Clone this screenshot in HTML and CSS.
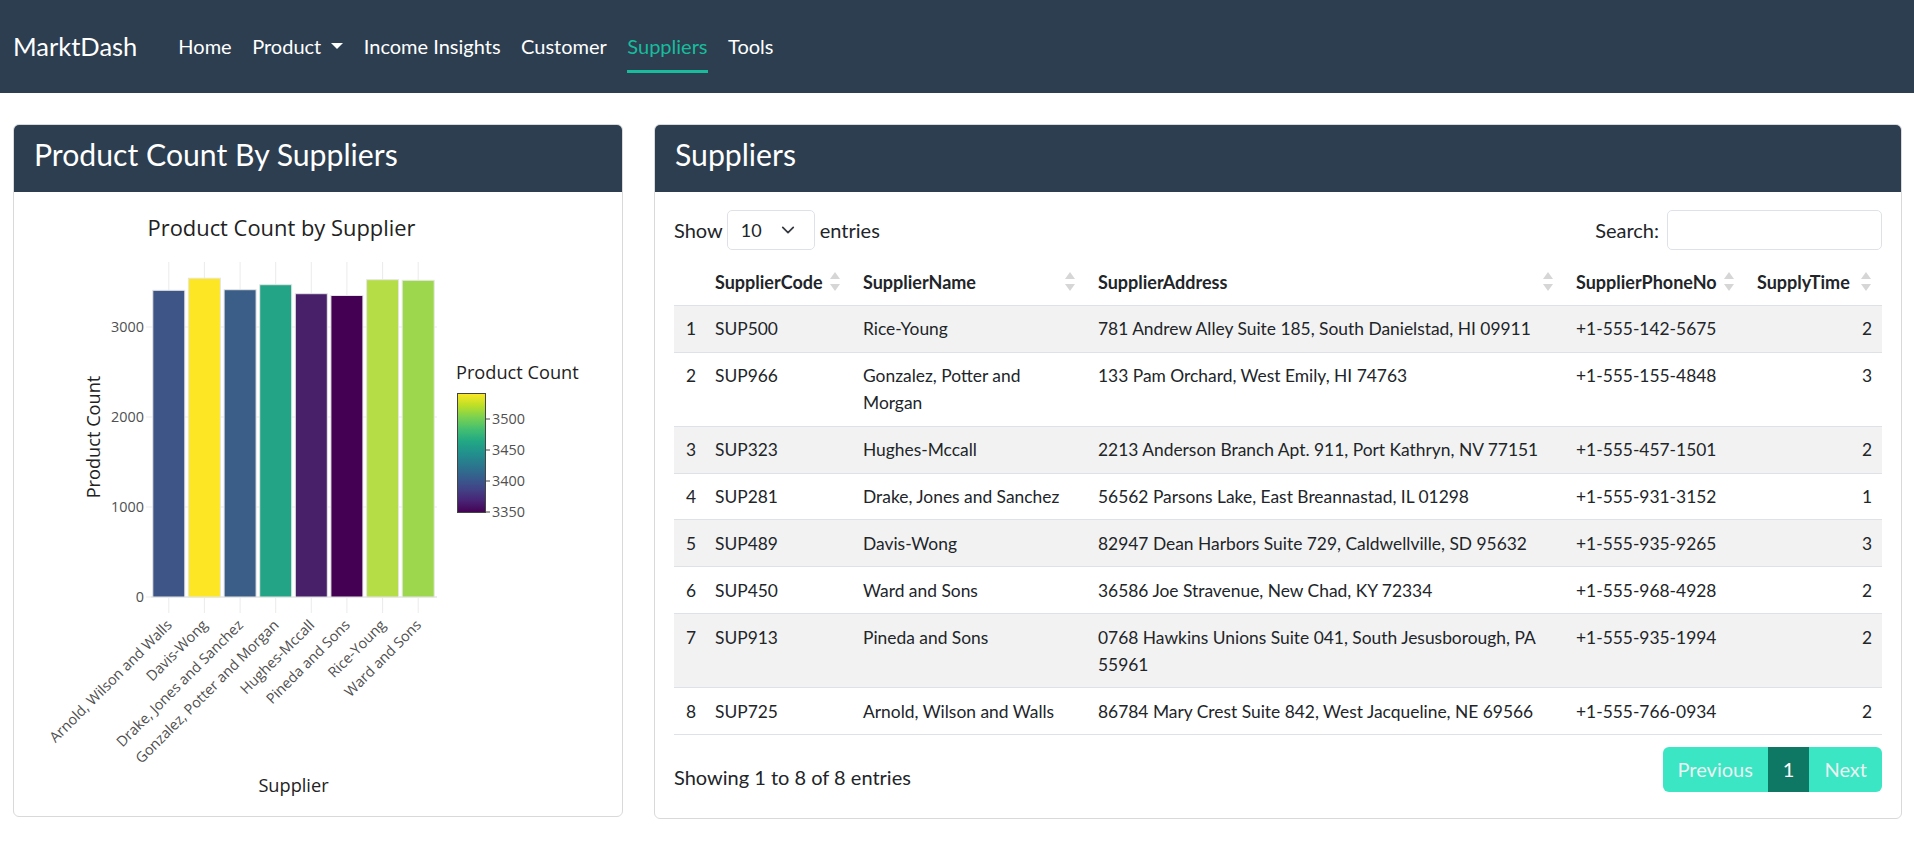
FILE: index.html
```html
<!DOCTYPE html>
<html lang="en">
<head>
<meta charset="utf-8">
<title>MarktDash - Suppliers</title>
<link rel="stylesheet" href="styles.css">
</head>
<body>
<nav class="navbar">
  <a class="brand" href="#">MarktDash</a>
  <ul class="nav">
    <li><a class="nav-link" href="#">Home</a></li>
    <li><a class="nav-link dropdown" href="#">Product<span class="caret"></span></a></li>
    <li><a class="nav-link" href="#">Income Insights</a></li>
    <li><a class="nav-link" href="#">Customer</a></li>
    <li><a class="nav-link active" href="#">Suppliers</a></li>
    <li><a class="nav-link" href="#">Tools</a></li>
  </ul>
</nav>

<main class="content">
  <section class="card card-chart">
    <header class="card-header"><h3>Product Count By Suppliers</h3></header>
    <div class="card-body chart-body">
      <svg class="chart" width="608" height="624" viewBox="14 192 608 624" xmlns="http://www.w3.org/2000/svg">
        <defs>
          <linearGradient id="viridis" x1="0" y1="1" x2="0" y2="0">
            <stop offset="0" stop-color="#440154"/>
            <stop offset="0.1" stop-color="#482475"/>
            <stop offset="0.2" stop-color="#414487"/>
            <stop offset="0.3" stop-color="#355f8d"/>
            <stop offset="0.4" stop-color="#2a788e"/>
            <stop offset="0.5" stop-color="#21918c"/>
            <stop offset="0.6" stop-color="#22a884"/>
            <stop offset="0.7" stop-color="#44bf70"/>
            <stop offset="0.8" stop-color="#7ad151"/>
            <stop offset="0.9" stop-color="#bddf26"/>
            <stop offset="1" stop-color="#fde725"/>
          </linearGradient>
        </defs>
        <text class="c-title" x="281.5" y="235.5" text-anchor="middle">Product Count by Supplier</text>

        <g class="grid">
          <line x1="151" y1="507" x2="437" y2="507"/>
          <line x1="151" y1="417" x2="437" y2="417"/>
          <line x1="151" y1="327" x2="437" y2="327"/>
          <line x1="168.8" y1="262" x2="168.8" y2="613"/>
          <line x1="204.4" y1="262" x2="204.4" y2="613"/>
          <line x1="240.1" y1="262" x2="240.1" y2="613"/>
          <line x1="275.7" y1="262" x2="275.7" y2="613"/>
          <line x1="311.3" y1="262" x2="311.3" y2="613"/>
          <line x1="346.9" y1="262" x2="346.9" y2="613"/>
          <line x1="382.6" y1="262" x2="382.6" y2="613"/>
          <line x1="418.2" y1="262" x2="418.2" y2="613"/>
          <line x1="146" y1="597" x2="151" y2="597"/>
          <line x1="146" y1="507" x2="151" y2="507"/>
          <line x1="146" y1="417" x2="151" y2="417"/>
          <line x1="146" y1="327" x2="151" y2="327"/>
        </g>
        <line class="zero" x1="151" y1="597" x2="437" y2="597"/>

        <g class="ytick" text-anchor="end">
          <text x="144" y="602">0</text>
          <text x="144" y="512">1000</text>
          <text x="144" y="422">2000</text>
          <text x="144" y="332">3000</text>
        </g>

        <g class="bars">
          <rect x="152.8" y="290.3" width="32" height="306.7" fill="#3e5588"/>
          <rect x="188.4" y="278.2" width="32" height="318.8" fill="#fde725"/>
          <rect x="224.1" y="289.7" width="32" height="307.3" fill="#3b5e88"/>
          <rect x="259.7" y="284.7" width="32" height="312.3" fill="#24a486"/>
          <rect x="295.3" y="293.7" width="32" height="303.3" fill="#48206a"/>
          <rect x="330.9" y="295.5" width="32" height="301.5" fill="#440154"/>
          <rect x="366.6" y="279.7" width="32" height="317.3" fill="#b4dd46"/>
          <rect x="402.2" y="280.3" width="32" height="316.7" fill="#9dd74d"/>
        </g>

        <g class="xtick" text-anchor="end">
          <text transform="translate(172.8,626) rotate(-45)">Arnold, Wilson and Walls</text>
          <text transform="translate(208.4,626) rotate(-45)">Davis-Wong</text>
          <text transform="translate(244.1,626) rotate(-45)">Drake, Jones and Sanchez</text>
          <text transform="translate(279.7,626) rotate(-45)">Gonzalez, Potter and Morgan</text>
          <text transform="translate(315.3,626) rotate(-45)">Hughes-Mccall</text>
          <text transform="translate(350.9,626) rotate(-45)">Pineda and Sons</text>
          <text transform="translate(386.6,626) rotate(-45)">Rice-Young</text>
          <text transform="translate(422.2,626) rotate(-45)">Ward and Sons</text>
        </g>

        <text class="a-title" transform="translate(99.5,437) rotate(-90)" text-anchor="middle">Product Count</text>
        <text class="a-title" x="293.5" y="792" text-anchor="middle">Supplier</text>

        <text class="a-title" x="456" y="379">Product Count</text>
        <rect x="457.5" y="393.5" width="28" height="119" fill="url(#viridis)" stroke="#444" stroke-width="1"/>
        <g class="grid-dark">
          <line x1="486" y1="419" x2="490" y2="419"/>
          <line x1="486" y1="450" x2="490" y2="450"/>
          <line x1="486" y1="481" x2="490" y2="481"/>
          <line x1="486" y1="512" x2="490" y2="512"/>
        </g>
        <g class="ytick">
          <text x="492" y="424">3500</text>
          <text x="492" y="455">3450</text>
          <text x="492" y="486">3400</text>
          <text x="492" y="517">3350</text>
        </g>
      </svg>
    </div>
  </section>

  <section class="card card-table">
    <header class="card-header"><h3>Suppliers</h3></header>
    <div class="card-body table-body">
      <div class="dt-top">
        <label class="dt-length">Show
          <span class="select">10
            <svg width="14" height="10" viewBox="0 0 16 10"><path d="M2 2l6 6 6-6" fill="none" stroke="#343a40" stroke-width="2" stroke-linecap="round" stroke-linejoin="round"/></svg>
          </span>
          entries</label>
        <label class="dt-search">Search: <input type="search" class="search-input"></label>
      </div>

      <table class="dt">
        <colgroup>
          <col style="width:29px"><col style="width:148px"><col style="width:235px"><col style="width:478px"><col style="width:181px"><col style="width:137px">
        </colgroup>
        <thead>
          <tr>
            <th class="idx"></th>
            <th class="sorting">SupplierCode</th>
            <th class="sorting">SupplierName</th>
            <th class="sorting">SupplierAddress</th>
            <th class="sorting">SupplierPhoneNo</th>
            <th class="sorting">SupplyTime</th>
          </tr>
        </thead>
        <tbody>
          <tr><td class="idx">1</td><td>SUP500</td><td>Rice-Young</td><td>781 Andrew Alley Suite 185, South Danielstad, HI 09911</td><td>+1-555-142-5675</td><td class="num">2</td></tr>
          <tr><td class="idx">2</td><td>SUP966</td><td>Gonzalez, Potter and Morgan</td><td>133 Pam Orchard, West Emily, HI 74763</td><td>+1-555-155-4848</td><td class="num">3</td></tr>
          <tr><td class="idx">3</td><td>SUP323</td><td>Hughes-Mccall</td><td>2213 Anderson Branch Apt. 911, Port Kathryn, NV 77151</td><td>+1-555-457-1501</td><td class="num">2</td></tr>
          <tr><td class="idx">4</td><td>SUP281</td><td>Drake, Jones and Sanchez</td><td>56562 Parsons Lake, East Breannastad, IL 01298</td><td>+1-555-931-3152</td><td class="num">1</td></tr>
          <tr><td class="idx">5</td><td>SUP489</td><td>Davis-Wong</td><td>82947 Dean Harbors Suite 729, Caldwellville, SD 95632</td><td>+1-555-935-9265</td><td class="num">3</td></tr>
          <tr><td class="idx">6</td><td>SUP450</td><td>Ward and Sons</td><td>36586 Joe Stravenue, New Chad, KY 72334</td><td>+1-555-968-4928</td><td class="num">2</td></tr>
          <tr><td class="idx">7</td><td>SUP913</td><td>Pineda and Sons</td><td>0768 Hawkins Unions Suite 041, South Jesusborough, PA 55961</td><td>+1-555-935-1994</td><td class="num">2</td></tr>
          <tr><td class="idx">8</td><td>SUP725</td><td>Arnold, Wilson and Walls</td><td>86784 Mary Crest Suite 842, West Jacqueline, NE 69566</td><td>+1-555-766-0934</td><td class="num">2</td></tr>
        </tbody>
      </table>

      <div class="dt-bottom">
        <div class="dt-info">Showing 1 to 8 of 8 entries</div>
        <ul class="pagination">
          <li class="page disabled"><a href="#">Previous</a></li>
          <li class="page active"><a href="#">1</a></li>
          <li class="page disabled"><a href="#">Next</a></li>
        </ul>
      </div>
    </div>
  </section>
</main>
</body>
</html>
```

FILE: styles.css
```css
* { box-sizing: border-box; }

body {
  margin: 0;
  font-family: Lato, "Open Sans", "Liberation Sans", sans-serif;
  font-size: 20px;
  line-height: 1.5;
  color: #212529;
  background: #fff;
}

a { text-decoration: none; }

/* ---------- navbar ---------- */
.navbar {
  height: 93px;
  background: #2c3e50;
  display: flex;
  align-items: center;
  padding: 0 13px;
}
.brand {
  color: #fff;
  font-size: 25.5px;
  line-height: 1.2;
  margin-right: 41px;
}
.nav {
  list-style: none;
  margin: 0;
  padding: 0;
  display: flex;
  gap: 20.5px;
  align-self: flex-start;
  margin-top: 19px;
}
.nav-link {
  display: flex;
  align-items: center;
  color: #fff;
  padding: 12px 0 9px;
  line-height: 30px;
  border-bottom: 3px solid transparent;
}
.nav-link.active {
  color: #18bc9c;
  border-bottom-color: #18bc9c;
}
.caret {
  display: inline-block;
  margin-left: 10px;
  width: 0;
  height: 0;
  border-top: 6px solid #fff;
  border-left: 6px solid transparent;
  border-right: 6px solid transparent;
}

/* ---------- layout ---------- */
.content {
  display: grid;
  grid-template-columns: 610px 1248px;
  column-gap: 31px;
  align-items: start;
  padding: 31px 12px 0 13px;
}

.card {
  border: 1px solid #d9d9d9;
  border-radius: 6px;
  overflow: hidden;
  background: #fff;
}
.card-header {
  background: #2c3e50;
  height: 67px;
  padding: 10px 20px 0;
}
.card-header h3 {
  margin: 0;
  color: #fff;
  font-weight: 400;
  font-size: 30.2px;
  line-height: 38px;
}

.chart-body { padding: 0; }
.chart { display: block; }
.chart text { font-family: "Open Sans", "Liberation Sans", sans-serif; }
.c-title { font-size: 21.9px; fill: #222; }
.a-title { font-size: 18.2px; fill: #222; }
.ytick text, .xtick text { font-size: 14.4px; fill: #505050; }
.grid line { stroke: #ebebeb; stroke-width: 1; }
.zero { stroke: #ebebeb; stroke-width: 2; }
.grid-dark line { stroke: #444; stroke-width: 1; }
.bars rect { stroke: #e6e6e6; stroke-width: 1; }

/* ---------- table card ---------- */
.table-body { padding: 18px 19px 26px; }

.dt-top {
  display: flex;
  justify-content: space-between;
  align-items: center;
  height: 40px;
}
.dt-length, .dt-search {
  display: flex;
  align-items: center;
}
.dt-length { gap: 4px; }
.dt-search { gap: 8px; }
.select {
  display: flex;
  align-items: center;
  justify-content: space-between;
  width: 88px;
  height: 40px;
  padding: 0 19px 0 13px;
  border: 1px solid #dee2e6;
  border-radius: 5px;
  margin-right: 1px;
  font-size: 18px;
}
.search-input {
  width: 215px;
  height: 40px;
  border: 1px solid #dee2e6;
  border-radius: 5px;
  font: inherit;
}

.dt {
  width: 1208px;
  table-layout: fixed;
  border-collapse: collapse;
  margin-top: 9px;
  font-size: 17.4px;
}
.dt th, .dt td {
  padding: 9.5px 12px 9.4px;
  text-align: left;
  vertical-align: top;
  line-height: 27px;
}
.dt th {
  font-size: 18px;
  font-weight: 700;
  position: relative;
  border-bottom: 1px solid #dee2e6;
}
.dt td { border-bottom: 1px solid #dee2e6; }
.dt .idx { padding-right: 4px; }
.dt td.num { text-align: right; padding-right: 10px; }
.dt tbody tr:nth-child(odd) td { background: #f2f2f2; }

.sorting::before, .sorting::after {
  content: "";
  position: absolute;
  right: 11px;
  width: 0;
  height: 0;
  border-left: 5px solid transparent;
  border-right: 5px solid transparent;
}
.sorting::before {
  top: calc(50% - 10px);
  border-bottom: 7px solid #d6d6d6;
}
.sorting::after {
  top: calc(50% + 2px);
  border-top: 7px solid #d6d6d6;
}

.dt-bottom {
  display: flex;
  justify-content: space-between;
  align-items: flex-start;
  margin-top: 12px;
}
.dt-info { padding-top: 15px; line-height: 30px; }

.pagination {
  list-style: none;
  margin: 0;
  padding: 0;
  display: flex;
  height: 45px;
  border-radius: 6px;
  overflow: hidden;
}
.page a {
  display: block;
  height: 45px;
  line-height: 45px;
  padding: 0 15px;
  color: #fff;
}
.page.disabled a { background: #3be6c4; color: #ecf0f1; }
.page.active a { background: #0f7864; color: #fff; }
```
